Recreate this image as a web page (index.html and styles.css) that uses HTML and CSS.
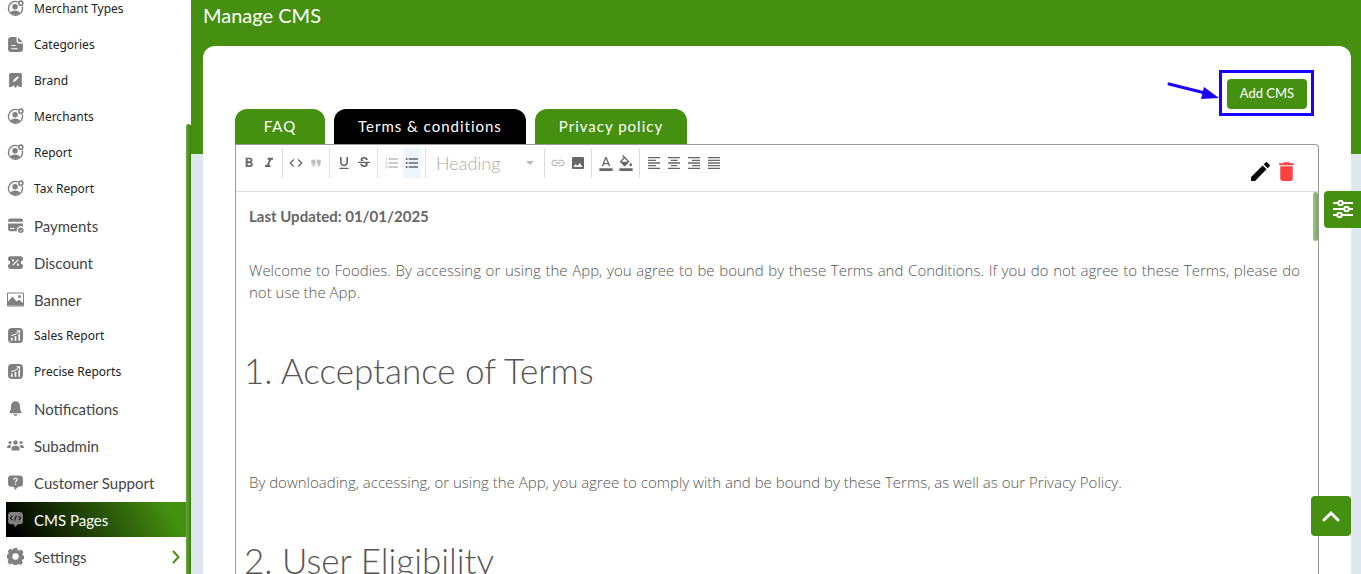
FILE: index.html
```
<!DOCTYPE html>
<html lang="en">
  <head>
    <meta charset="utf-8" />
    <meta name="viewport" content="width=device-width, initial-scale=1" />
    <title>Manage CMS</title>
    <link rel="stylesheet" href="styles.css">
  </head>

  <body>
    <svg class="sprite">
      <symbol id="i-user" viewBox="0 0 16 16">
        <path d="M10.3 1.7A6.6 6.6 0 1 0 14.3 6" fill="none" stroke="#808080" stroke-width="1.3"/>
        <circle cx="7.6" cy="6.3" r="2.6"/>
        <path d="M3 12.2c.6-3.200 8.600-3.200 9.200 0a6.600 6.600 0 0 1-9.200 0z"/>
        <circle cx="13" cy="3" r="1.900" fill="none" stroke="#808080" stroke-width="1.500"/>
      </symbol>
      <symbol id="i-file" viewBox="0 0 16 16">
        <path d="M4 1h5v3.500C9 6 10 7 11.500 7H15v5a3 3 0 0 1-3 3H4a3 3 0 0 1-3-3V4a3 3 0 0 1 3-3z"/>
        <path d="M10.300 1.200L14.800 5.700H12c-1.100 0-1.700-.6-1.700-1.700z"/>
        <path d="M4 9h4M4 12h6" stroke="#fff" stroke-width="1"/>
      </symbol>
      <symbol id="i-brand" viewBox="0 0 16 16">
        <path d="M3.500 1h9A1.500 1.500 0 0 1 14 2.500V14h-2.500L10 12.500 8 15l-2-2.500L4.500 14H2V2.500A1.500 1.500 0 0 1 3.500 1z"/>
        <path d="M5.500 9.500l1-2.500L10 4l1.200 1.200L7.800 8.800z" fill="#fff"/>
      </symbol>
      <symbol id="i-card" viewBox="0 0 16 16">
        <path d="M3 1.500h10a2 2 0 0 1 2 2v1H1v-1a2 2 0 0 1 2-2zM1 6h14v3.500a3.500 3.500 0 0 0-5.500 4H3a2 2 0 0 1-2-2z"/>
        <path d="M3 10.800h4" stroke="#fff"/>
        <circle cx="13" cy="12.500" r="2.600"/>
        <path d="M11.800 12.500l1 1 1.500-2" fill="none" stroke="#fff" stroke-width=".8"/>
      </symbol>
      <symbol id="i-discount" viewBox="0 0 16 16">
        <path d="M3 2h10a2 2 0 0 1 2 2v2a2 2 0 0 0 0 4v2a2 2 0 0 1-2 2H3a2 2 0 0 1-2-2v-2a2 2 0 0 0 0-4V4a2 2 0 0 1 2-2z"/>
        <path d="M5.500 10.500l5-5" stroke="#fff" stroke-width="1.200"/>
        <circle cx="5.700" cy="6" r="1" fill="#fff"/><circle cx="10.300" cy="10" r="1" fill="#fff"/>
      </symbol>
      <symbol id="i-banner" viewBox="0 0 17 14">
        <path d="M.5.500h16v13H.5z" fill="none" stroke="#808080"/>
        <path d="M1 9l4.500-5 4 5L12 7l4 3.500V13H1z"/><circle cx="12.500" cy="4" r="1.500"/>
      </symbol>
      <symbol id="i-chart" viewBox="0 0 16 16">
        <rect x="1" y="1" width="14" height="14" rx="3.500"/>
        <path d="M4.500 13v-3M8 13V8.500M11.500 13V6.500" stroke="#fff" stroke-width="1.500"/>
        <path d="M4 8c3-.3 5.500-1.700 7.500-4.200M9 3.500h2.800v2.700" fill="none" stroke="#fff"/>
      </symbol>
      <symbol id="i-bell" viewBox="0 0 16 16">
        <path d="M8 1.200a4.200 4.200 0 0 0-4.200 4.200c0 3-.3 4-1.300 5.600-.5.900 0 1.500 1 1.500h9c1 0 1.500-.6 1-1.500-1-1.600-1.300-2.600-1.300-5.600A4.200 4.200 0 0 0 8 1.200zM6 13.300h4c-.4 1.900-3.600 1.900-4 0z"/>
      </symbol>
      <symbol id="i-group" viewBox="0 0 17 12">
        <circle cx="8.500" cy="3" r="2.200"/><circle cx="3" cy="3" r="1.600"/><circle cx="14" cy="3" r="1.600"/>
        <path d="M4.500 11V8.500c0-3 8-3 8 0V11zM0 8.500c0-3 2.500-3.300 4.300-2.500C3.300 7 3.500 8 3.500 8.500zM17 8.500c0-3-2.500-3.300-4.300-2.500 1 1 .8 2 .8 2.500z"/>
      </symbol>
      <symbol id="i-help" viewBox="0 0 16 16">
        <path d="M4 1.500h8a3 3 0 0 1 3 3V9a3 3 0 0 1-3 3h-1.500L7.500 15l-1-3H4a3 3 0 0 1-3-3V4.500a3 3 0 0 1 3-3z"/>
        <path d="M6.500 5.400c0-2 3.200-1.700 3 .1C9.400 6.700 8 6.500 8 8" fill="none" stroke="#fff" stroke-width="1.100"/>
        <path d="M7.400 9h1.200v1.200H7.400z" fill="#fff"/>
      </symbol>
      <symbol id="i-code" viewBox="0 0 16 16">
        <path d="M4 1h8a3 3 0 0 1 3 3v5.500a3 3 0 0 1-3 3h-2L8 15l-2-2.500H4a3 3 0 0 1-3-3V4a3 3 0 0 1 3-3z"/>
        <path d="M5 4.800L3.200 6.700 5 8.600M11 4.800l1.800 1.900L11 8.600M8.800 4.500L7.200 9" fill="none" stroke="#111"/>
      </symbol>
      <symbol id="i-gear" viewBox="0 0 16 16">
        <path d="M6.300 0h3.400l.5 2 1.200.5 1.900-1 2.200 2.300-1 1.900.4 1.200 1.100.7v2.700l-1.500.5-.4 1.200.9 1.800-2.200 2.200-1.800-.9-1.200.5-.6.400H6.400l-1-.9-1.100-.500-1.700.9L.5 13.100l.9-1.700L1 10.200l-1-.5V6.400l1.100-.500.5-1.200-.9-1.700L2.900.800l1.900.9 1-.400zM8 5a3 3 0 1 0 0 6 3 3 0 0 0 0-6z" fill-rule="evenodd"/>
      </symbol>
    </svg>

    <div class="layout">
      <aside class="sidebar">
        <nav>
          <ul class="menu">
            <li class="small"><a href="#"><svg><use href="#i-user"/></svg>Merchant Types</a></li>
            <li class="small"><a href="#"><svg><use href="#i-file"/></svg>Categories</a></li>
            <li class="small"><a href="#"><svg><use href="#i-brand"/></svg>Brand</a></li>
            <li class="small"><a href="#"><svg><use href="#i-user"/></svg>Merchants</a></li>
            <li class="small"><a href="#"><svg><use href="#i-user"/></svg>Report</a></li>
            <li class="small"><a href="#"><svg><use href="#i-user"/></svg>Tax Report</a></li>
            <li><a href="#"><svg><use href="#i-card"/></svg>Payments</a></li>
            <li><a href="#"><svg><use href="#i-discount"/></svg>Discount</a></li>
            <li><a href="#"><svg><use href="#i-banner"/></svg>Banner</a></li>
            <li class="small"><a href="#"><svg><use href="#i-chart"/></svg>Sales Report</a></li>
            <li class="small"><a href="#"><svg><use href="#i-chart"/></svg>Precise Reports</a></li>
            <li><a href="#"><svg><use href="#i-bell"/></svg>Notifications</a></li>
            <li><a href="#"><svg><use href="#i-group"/></svg>Subadmin</a></li>
            <li><a href="#"><svg><use href="#i-help"/></svg>Customer Support</a></li>
            <li><a href="#" class="active"><svg><use href="#i-code"/></svg>CMS Pages</a></li>
            <li><a href="#"><svg><use href="#i-gear"/></svg>Settings
              <svg class="arrow" viewBox="0 0 8 14"><path d="M1 1l5.500 6L1 13"/></svg></a></li>
          </ul>
        </nav>
        <div class="sidebar-thumb"></div>
      </aside>

      <main>
        <h1>Manage CMS</h1>
        <div class="card">
          <div class="actions">
            <svg class="pointer" viewBox="0 0 54 20"><path d="M4 4l36 9" stroke="#1a00ff" stroke-width="3" stroke-linecap="round"/><path d="M39 7l15 11-18 1z" fill="#1a00ff"/></svg>
            <div class="highlight"><button class="add">Add CMS</button></div>
          </div>

          <div class="tabs">
            <button>FAQ</button>
            <button class="current">Terms &amp; conditions</button>
            <button>Privacy policy</button>
          </div>

          <div class="editor">
            <div class="toolbar">
              <div class="group">
                <button aria-label="Bold"><svg viewBox="0 0 24 24"><path d="M15.600 10.790c.97-.67 1.650-1.770 1.650-2.790 0-2.260-1.750-4-4-4H7v14h7.040c2.090 0 3.710-1.700 3.710-3.790 0-1.520-.86-2.820-2.150-3.420zM10 6.500h3c.83 0 1.500.67 1.500 1.500s-.67 1.500-1.500 1.500h-3v-3zm3.500 9H10v-3h3.500c.83 0 1.500.67 1.500 1.500s-.67 1.500-1.500 1.500z"/></svg></button>
                <button aria-label="Italic"><svg viewBox="0 0 24 24"><path d="M10 4v3h2.210l-3.420 8H6v3h8v-3h-2.210l3.420-8H18V4z"/></svg></button>
              </div>
              <div class="group">
                <button aria-label="Code"><svg viewBox="0 0 24 24"><path d="M9.400 16.600L4.800 12l4.600-4.600L8 6l-6 6 6 6 1.400-1.400zm5.200 0l4.600-4.600-4.600-4.600L16 6l6 6-6 6-1.400-1.400z"/></svg></button>
                <button aria-label="Quote" class="pale"><svg viewBox="0 0 24 24"><path d="M6 17h3l2-4V7H5v6h3zm8 0h3l2-4V7h-6v6h3z"/></svg></button>
              </div>
              <div class="group wide">
                <button aria-label="Underline"><svg viewBox="0 0 24 24"><path d="M12 17c3.310 0 6-2.690 6-6V3h-2.500v8c0 1.930-1.570 3.500-3.500 3.500S8.500 12.930 8.500 11V3H6v8c0 3.310 2.690 6 6 6zm-7 2v2h14v-2H5z"/></svg></button>
                <button aria-label="Strikethrough"><svg viewBox="0 0 24 24"><path d="M7.240 8.750c-.26-.48-.39-1.030-.39-1.670 0-.61.130-1.160.4-1.670.26-.5.630-.93 1.110-1.290.48-.35 1.050-.63 1.700-.83.66-.19 1.390-.29 2.180-.29.810 0 1.540.110 2.210.34.660.22 1.230.54 1.690.94.47.4.830.88 1.080 1.430s.38 1.150.38 1.810h-3.010c0-.31-.05-.59-.15-.85-.09-.27-.24-.49-.44-.68-.2-.19-.45-.33-.75-.44-.3-.1-.66-.16-1.060-.16-.39 0-.74.040-1.030.13s-.53.210-.72.360c-.19.160-.34.340-.44.550-.1.210-.15.430-.15.660 0 .48.250.88.740 1.210.38.250.77.480 1.410.7H7.390c-.05-.08-.11-.17-.15-.25zM21 12v-2H3v2h9.620c.18.070.4.140.55.200.37.170.66.340.87.510s.35.360.43.570c.07.200.11.430.11.690 0 .23-.05.450-.14.660-.09.200-.23.380-.42.530-.19.150-.42.260-.71.350-.29.080-.63.130-1.010.13-.43 0-.83-.04-1.180-.13s-.66-.23-.91-.42c-.25-.19-.45-.44-.59-.75s-.25-.76-.25-1.210H6.400c0 .55.080 1.130.24 1.580s.37.850.65 1.210c.28.350.6.660.98.920.37.260.78.480 1.220.65.440.17.900.3 1.380.39.480.08.960.13 1.440.13.800 0 1.530-.09 2.180-.28s1.210-.45 1.670-.79c.46-.34.820-.77 1.070-1.270s.38-1.070.38-1.710c0-.6-.1-1.140-.31-1.610-.05-.11-.11-.23-.17-.33H21z"/></svg></button>
              </div>
              <div class="group wide">
                <button aria-label="Numbered list" class="pale"><svg viewBox="0 0 24 24"><path d="M2 17h2v.5H3v1h1v.5H2v1h3v-4H2v1zm1-9h1V4H2v1h1v3zm-1 3h1.800L2 13.100v.9h3v-1H3.200L5 10.900V10H2v1zm5-6v2h14V5H7zm0 14h14v-2H7v2zm0-6h14v-2H7v2z"/></svg></button>
                <button aria-label="Bulleted list" class="on"><svg viewBox="0 0 24 24"><path d="M4 10.500c-.83 0-1.500.67-1.500 1.500s.67 1.500 1.500 1.500 1.500-.67 1.500-1.500-.67-1.500-1.500-1.500zm0-6c-.83 0-1.500.67-1.500 1.500S3.170 7.500 4 7.500 5.500 6.830 5.500 6 4.830 4.500 4 4.500zm0 12c-.83 0-1.500.68-1.500 1.500s.68 1.500 1.500 1.500 1.500-.68 1.500-1.500-.67-1.500-1.500-1.500zM7 19h14v-2H7v2zm0-6h14v-2H7v2zm0-8v2h14V5H7z"/></svg></button>
              </div>
              <div class="group">
                <label class="heading">
                  <select aria-label="Heading"><option>Heading</option></select>
                </label>
              </div>
              <div class="group">
                <button aria-label="Link" class="pale"><svg viewBox="0 0 24 24"><path d="M3.900 12c0-1.710 1.390-3.100 3.100-3.100h4V7H7c-2.760 0-5 2.240-5 5s2.240 5 5 5h4v-1.900H7c-1.710 0-3.100-1.390-3.100-3.100zM8 13h8v-2H8v2zm9-6h-4v1.900h4c1.710 0 3.100 1.390 3.100 3.100s-1.390 3.100-3.100 3.100h-4V17h4c2.760 0 5-2.240 5-5s-2.240-5-5-5z"/></svg></button>
                <button aria-label="Image"><svg viewBox="0 0 24 24"><path d="M21 19V5c0-1.100-.9-2-2-2H5c-1.100 0-2 .9-2 2v14c0 1.100.9 2 2 2h14c1.100 0 2-.9 2-2zM8.500 13.500l2.500 3.010L14.500 12l4.500 6H5l3.500-4.500z"/></svg></button>
              </div>
              <div class="group wide">
                <button aria-label="Text colour"><svg viewBox="0 0 24 24"><path d="M2 20h20v4H2zM11 3L5.500 17h2.250l1.120-3h6.250l1.120 3h2.250L13 3h-2zm-1.380 9L12 5.670 14.380 12H9.620z"/></svg></button>
                <button aria-label="Fill colour"><svg viewBox="0 0 24 24"><path d="M16.560 8.940L7.620 0 6.210 1.410l2.380 2.380-5.150 5.150c-.59.590-.59 1.540 0 2.120l5.500 5.500c.29.290.68.440 1.060.44s.77-.15 1.060-.44l5.500-5.500c.59-.58.590-1.530 0-2.120zM5.210 10L10 5.210 14.790 10H5.210zM19 11.500s-2 2.170-2 3.500c0 1.100.9 2 2 2s2-.9 2-2c0-1.330-2-3.500-2-3.500zM2 20h20v4H2z"/></svg></button>
              </div>
              <div class="group wide">
                <button aria-label="Align left"><svg viewBox="0 0 24 24"><path d="M15 15H3v2h12v-2zm0-8H3v2h12V7zM3 13h18v-2H3v2zm0 8h18v-2H3v2zM3 3v2h18V3H3z"/></svg></button>
                <button aria-label="Align center"><svg viewBox="0 0 24 24"><path d="M7 15v2h10v-2H7zm-4 6h18v-2H3v2zm0-8h18v-2H3v2zm4-6v2h10V7H7zM3 3v2h18V3H3z"/></svg></button>
                <button aria-label="Align right"><svg viewBox="0 0 24 24"><path d="M3 21h18v-2H3v2zm6-4h12v-2H9v2zm-6-4h18v-2H3v2zm6-4h12V7H9v2zM3 3v2h18V3H3z"/></svg></button>
                <button aria-label="Justify"><svg viewBox="0 0 24 24"><path d="M3 21h18v-2H3v2zm0-4h18v-2H3v2zm0-4h18v-2H3v2zm0-4h18V7H3v2zm0-6v2h18V3H3z"/></svg></button>
              </div>
              <div class="tools">
                <button aria-label="Edit"><svg viewBox="0 0 24 24"><path d="M3 17.250V21h3.750L17.810 9.940l-3.750-3.750L3 17.250zM20.710 7.040c.39-.39.390-1.020 0-1.410l-2.340-2.340c-.39-.39-1.020-.39-1.410 0l-1.830 1.830 3.750 3.750 1.830-1.830z"/></svg></button>
                <button aria-label="Delete" class="delete"><svg viewBox="0 0 24 24"><path d="M6 7v12c0 1.100.9 2 2 2h8c1.100 0 2-.9 2-2V7H6zM19 4h-3.500l-1-1h-5l-1 1H5v2h14z"/></svg></button>
              </div>
            </div>
            <div class="content">
              <p><strong>Last Updated: 01/01/2025</strong></p>
              <p>Welcome to Foodies. By accessing or using the App, you agree to be bound by these Terms and Conditions. If you do not agree to these Terms, please do not use the App.</p>
              <h2>1. Acceptance of Terms</h2>
              <p>By downloading, accessing, or using the App, you agree to comply with and be bound by these Terms, as well as our Privacy Policy.</p>
              <h2>2. User Eligibility</h2>
              <div class="content-thumb"></div>
            </div>
          </div>
        </div>
      </main>
    </div>

    <button class="float filters" aria-label="Filters">
      <svg viewBox="0 0 20 20" fill="none" stroke="#fff" stroke-width="2"><path d="M0 3h5M10 3h10M0 9h11M16 9h4M0 15h4M9 15h11"/><circle cx="7.500" cy="3" r="2.200"/><circle cx="13.500" cy="9" r="2.200"/><circle cx="6.500" cy="15" r="2.200"/></svg>
    </button>
    <button class="float to-top" aria-label="Back to top">
      <svg viewBox="0 0 20 20" fill="none" stroke="#fff" stroke-width="3" stroke-linecap="round"><path d="M3 14l7-7 7 7"/></svg>
    </button>
  </body>
</html>
```
FILE: styles.css
```
* {
  box-sizing: border-box;
}
body {
  margin: 0;
  font-family: Lato, "Liberation Sans", sans-serif;
  overflow: hidden;
}
button {
  border: none;
  padding: 0;
  background: none;
  font-family: inherit;
  cursor: pointer;
}
.sprite {
  display: none;
}
.layout {
  display: flex;
  height: 100vh;
  overflow: hidden;
}

/* sidebar */
.sidebar {
  position: relative;
  flex: 0 0 191px;
  background: #fff;
}
.menu {
  list-style: none;
  margin: -10px 5px 0 6px;
  padding: 0;
}
.menu li {
  height: 37px;
  padding-top: 2px;
}
.menu li.small {
  height: 36px;
  padding-top: 1px;
}
.menu a {
  display: flex;
  align-items: center;
  gap: 10px;
  height: 35px;
  padding-left: 1px;
  color: #444;
  font-size: 15px;
  text-decoration: none;
}
.menu .small a {
  color: #222;
  font-family: "Noto Sans", sans-serif;
  font-size: 12px;
}
.menu svg {
  width: 17px;
  height: 17px;
  fill: #808080;
}
.menu a.active {
  color: #fff;
  background: linear-gradient(60deg, #000 5%, #459010 90%);
}
.menu svg.arrow {
  width: 8px;
  height: 14px;
  margin-left: auto;
  margin-right: 6px;
  fill: none;
  stroke: #459010;
  stroke-width: 2;
}
.sidebar-thumb {
  position: absolute;
  top: 124px;
  right: 0;
  bottom: 0;
  width: 5px;
  border-radius: 3px 3px 0 0;
  background: linear-gradient(to right, #6aa640, #38800a);
}

/* page */
main {
  flex: 1;
  min-width: 0;
  padding: 0 10px 0 12px;
  background: linear-gradient(#459010 154px, #dfe7ef 154px);
}
h1 {
  margin: 0;
  height: 46px;
  color: #fff;
  font-size: 20px;
  font-weight: 400;
  line-height: 30px;
}
.card {
  min-height: 100%;
  padding: 24px 32px 0;
  border-radius: 12px;
  background: #fff;
}
.actions {
  display: flex;
  justify-content: flex-end;
  margin-right: 5px;
}
.pointer {
  width: 54px;
  height: 20px;
  margin-top: 10px;
}
.highlight {
  height: 46px;
  padding: 6px 4px 4px 5px;
  border: 3px solid #1a00ff;
}
.add {
  width: 80px;
  height: 30px;
  padding-bottom: 2px;
  border-radius: 4px;
  color: #fff;
  background: #459010;
  font-size: 13px;
}
.tabs {
  display: flex;
  gap: 9px;
  margin-top: -7px;
}
.tabs button {
  height: 35px;
  padding: 0 24px 2px;
  border-radius: 12px 12px 0 0;
  color: #fff;
  background: #459010;
  font-size: 15px;
  letter-spacing: 1px;
  min-width: 90px;
}
.tabs .current {
  background: #000;
}

/* editor */
.editor {
  border: 1px solid #999;
  border-bottom: none;
  border-radius: 0 4px 0 0;
}
.toolbar {
  display: flex;
  height: 47px;
  padding-top: 3px;
  border-bottom: 1px solid #ddd;
}
.group {
  display: flex;
  align-items: center;
  gap: 2px;
  height: 30px;
  padding: 0 4px;
  border-right: 1px solid #ddd;
}
.group.wide {
  padding-left: 5px;
}
.group:nth-child(8) {
  border-right: none;
}
.group button {
  display: flex;
  align-items: center;
  justify-content: center;
  width: 18px;
  height: 30px;
}
.group svg {
  width: 16px;
  height: 16px;
  fill: #666;
}
.group .pale svg {
  fill: #bbb;
}
.group .on {
  background: #eff5fe;
}
.heading {
  position: relative;
}
.heading select {
  width: 110px;
  height: 30px;
  padding: 0 0 0 6px;
  border: none;
  background: none;
  appearance: none;
  color: #aaa;
  font: 300 18px Lato, sans-serif;
}
.heading::after {
  content: "";
  position: absolute;
  top: 13px;
  right: 6px;
  border: 4px solid transparent;
  border-top-color: #bbb;
}
.tools {
  display: flex;
  align-items: center;
  gap: 1px;
  margin: 3px 19px 0 auto;
}
.tools svg {
  display: block;
  width: 25px;
  height: 25px;
}
.tools .delete svg {
  fill: #ff4343;
}
.content {
  position: relative;
  padding: 13px 18px 0 13px;
  color: #555;
  font-family: "Open Sans", sans-serif;
  font-size: 15px;
  font-weight: 300;
  line-height: 22px;
  text-align: justify;
}
.content strong {
  color: #666;
  font-family: Lato, sans-serif;
  font-weight: 700;
}
.content p {
  margin: 0 0 32px;
}
.content h2 {
  margin: 45px 0 79px -5px;
  font-family: Lato, sans-serif;
  font-size: 35px;
  font-weight: 300;
  line-height: 44px;
}
.content-thumb {
  position: absolute;
  top: 0;
  right: 0;
  width: 5px;
  height: 49px;
  border-radius: 3px;
  background: linear-gradient(to right, #9cc582, #76a958);
}

/* floating buttons */
.float {
  position: fixed;
  display: flex;
  align-items: center;
  justify-content: center;
  background: #459010;
}
.filters {
  top: 191px;
  right: 0;
  width: 37px;
  height: 37px;
  border-radius: 4px 0 0 4px;
}
.to-top {
  right: 10px;
  bottom: 38px;
  width: 40px;
  height: 40px;
  border-radius: 4px;
}
.float svg {
  width: 20px;
  height: 20px;
}
```
